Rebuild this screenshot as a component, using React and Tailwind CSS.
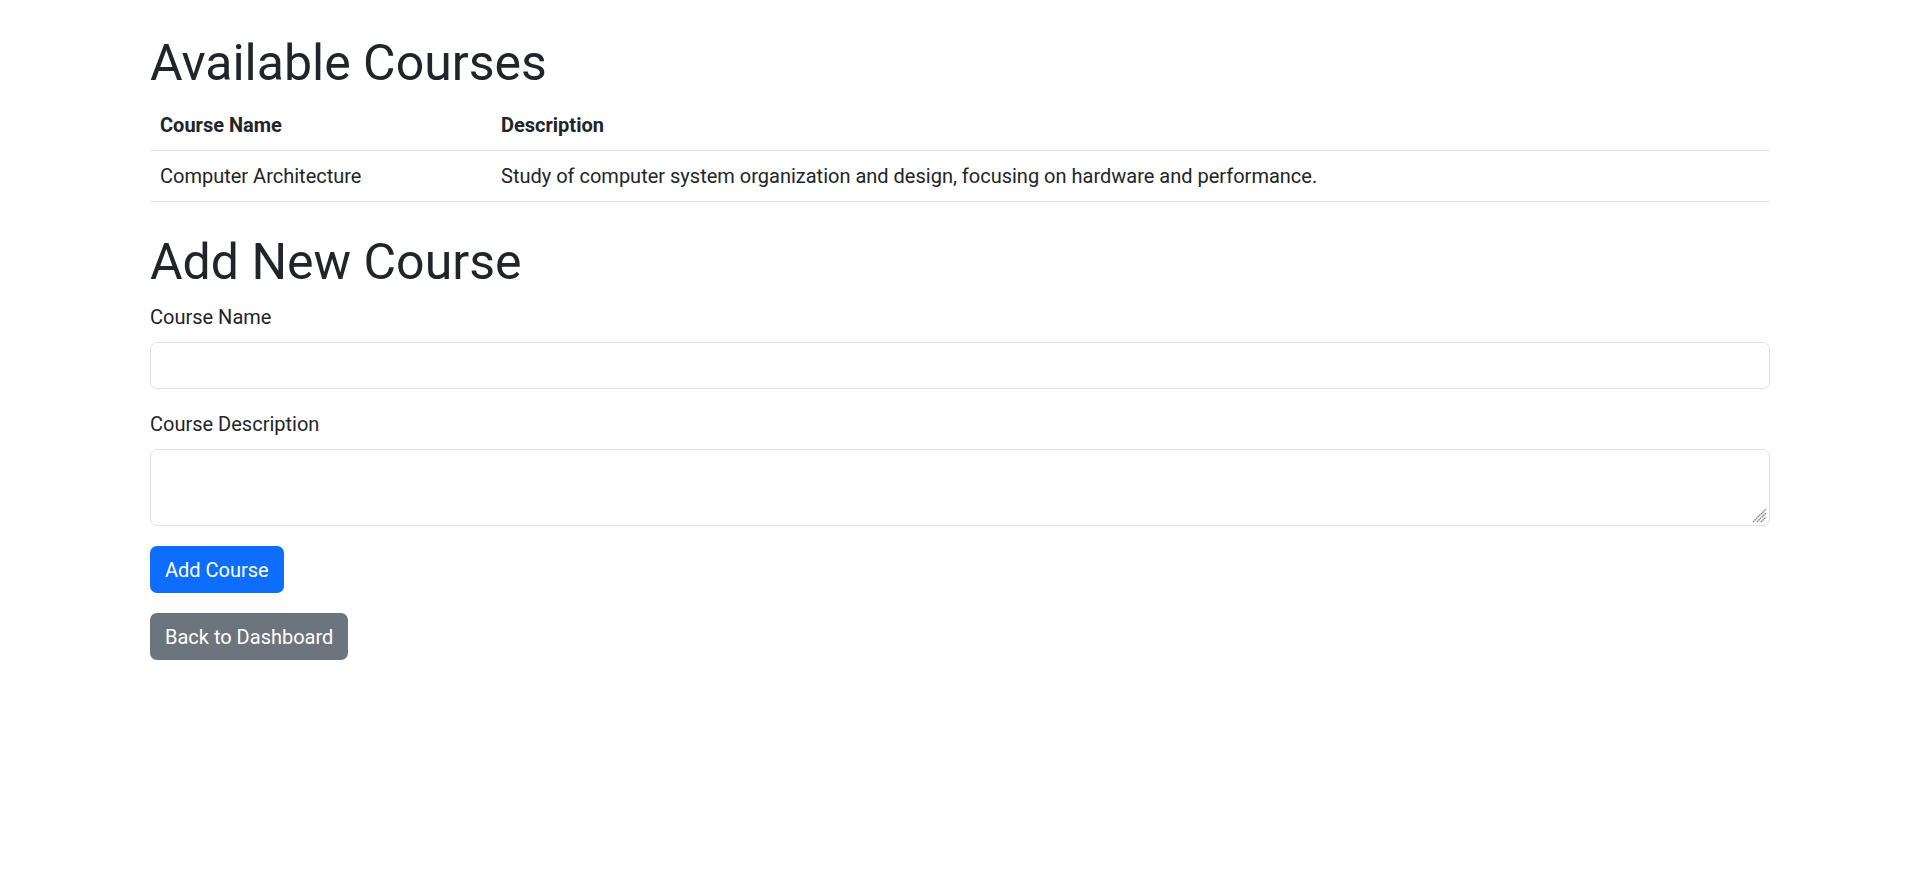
import React from "react";

export default function App() {
  return (
    <div className="min-h-[878px] bg-white text-[#212529] text-[20px] leading-[30px] font-['Roboto',sans-serif]">
      <div className="w-[1620px] mx-auto pt-[33px]">
        <h1 className="text-[50px] leading-[60px] font-normal mb-[7px]">Available Courses</h1>
        <table className="w-full mb-[20px] border-collapse">
          <thead>
            <tr className="border-b border-[#dee2e6]">
              <th className="text-left font-bold p-[10px] w-[341px]">Course Name</th>
              <th className="text-left font-bold p-[10px]">Description</th>
            </tr>
          </thead>
          <tbody>
            <tr className="border-b border-[#dee2e6]">
              <td className="p-[10px]">Computer Architecture</td>
              <td className="p-[10px]">Study of computer system organization and design, focusing on hardware and performance.</td>
            </tr>
          </tbody>
        </table>
        <h1 className="text-[50px] leading-[60px] font-normal mt-[30px] mb-[10px]">Add New Course</h1>
        <div className="mb-[20px]">
          <label className="block mb-[10px]">Course Name</label>
          <input className="block w-full h-[47px] border border-[#dee2e6] rounded-[7px] px-[15px] outline-none" />
        </div>
        <div className="mb-[20px]">
          <label className="block mb-[10px]">Course Description</label>
          <div className="relative">
            <textarea rows={2} className="block w-full h-[77px] border border-[#dee2e6] rounded-[7px] px-[15px] py-[7px] outline-none resize-none" />
            <svg className="absolute right-[3px] bottom-[3px] pointer-events-none" width="15" height="15" viewBox="0 0 15 15">
              <g stroke="#7a7a7a" strokeWidth="1.3" strokeDasharray="1.6 0.6">
                <line x1="1" y1="14" x2="14" y2="1" />
                <line x1="5" y1="14" x2="14" y2="5" />
                <line x1="9" y1="14" x2="14" y2="9" />
              </g>
            </svg>
          </div>
        </div>
        <button className="block bg-[#0d6efd] text-white h-[47px] px-[15px] rounded-[7px]">Add Course</button>
        <button className="block mt-[20px] bg-[#6c757d] text-white h-[47px] px-[15px] rounded-[7px]">Back to Dashboard</button>
      </div>
    </div>
  );
}
